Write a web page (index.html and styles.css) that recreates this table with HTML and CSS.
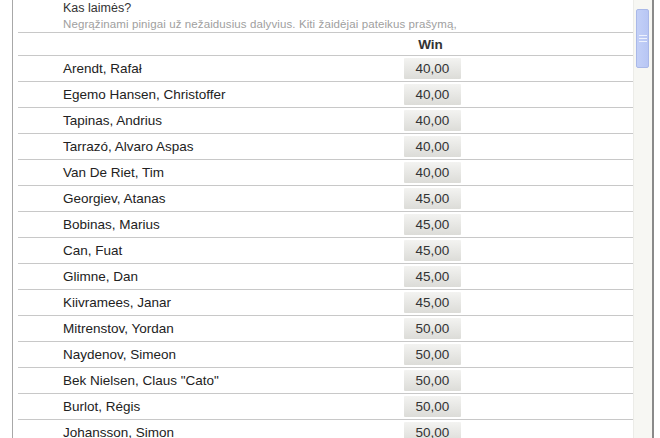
FILE: index.html
```html
<!DOCTYPE html>
<html>
<head>
<meta charset="utf-8">
<link rel="stylesheet" href="styles.css">
</head>
<body>
<div class="frame">
  <div class="panel">
    <div class="intro">
      <div class="title">Kas laimės?</div>
      <div class="desc">Negrąžinami pinigai už nežaidusius dalyvius. Kiti žaidėjai pateikus prašymą,</div>
    </div>
    <div class="row head"><span></span><span class="win-h">Win</span></div>
    <div class="row"><span class="name">Arendt, Rafał</span><span class="win">40,00</span></div>
    <div class="row"><span class="name">Egemo Hansen, Christoffer</span><span class="win">40,00</span></div>
    <div class="row"><span class="name">Tapinas, Andrius</span><span class="win">40,00</span></div>
    <div class="row"><span class="name">Tarrazó, Alvaro Aspas</span><span class="win">40,00</span></div>
    <div class="row"><span class="name">Van De Riet, Tim</span><span class="win">40,00</span></div>
    <div class="row"><span class="name">Georgiev, Atanas</span><span class="win">45,00</span></div>
    <div class="row"><span class="name">Bobinas, Marius</span><span class="win">45,00</span></div>
    <div class="row"><span class="name">Can, Fuat</span><span class="win">45,00</span></div>
    <div class="row"><span class="name">Glimne, Dan</span><span class="win">45,00</span></div>
    <div class="row"><span class="name">Kiivramees, Janar</span><span class="win">45,00</span></div>
    <div class="row"><span class="name">Mitrenstov, Yordan</span><span class="win">50,00</span></div>
    <div class="row"><span class="name">Naydenov, Simeon</span><span class="win">50,00</span></div>
    <div class="row"><span class="name">Bek Nielsen, Claus "Cato"</span><span class="win">50,00</span></div>
    <div class="row"><span class="name">Burlot, Régis</span><span class="win">50,00</span></div>
    <div class="row"><span class="name">Johansson, Simon</span><span class="win">50,00</span></div>
  </div>
  <div class="scrollbar">
    <div class="thumb"><span class="grip"></span><span class="grip"></span><span class="grip"></span></div>
  </div>
</div>
</body>
</html>
```
FILE: styles.css
```css
html, body {
  margin: 0;
  padding: 0;
  background: #fff;
}
.frame {
  width: 660px;
  height: 438px;
  overflow: hidden;
  display: flex;
  font-family: "Liberation Sans", Arial, sans-serif;
  color: #333;
}
.panel {
  margin-left: 12px;
  border-left: 1px solid #a8a8a8;
  padding-left: 5px;
  width: 615px;
  flex: none;
}
.intro {
  height: 33px;
  border-bottom: 1px solid #c8c8c8;
  padding-left: 45px;
  box-sizing: border-box;
}
.title {
  font-size: 12.5px;
  line-height: 16px;
  color: #333;
}
.desc {
  font-size: 11.5px;
  line-height: 16px;
  color: #a0a0a0;
  letter-spacing: 0.1px;
}
.row {
  display: grid;
  grid-template-columns: 386px 57px 1fr;
  align-items: center;
  height: 26px;
  box-sizing: border-box;
  border-bottom: 1px solid #c8c8c8;
}
.row.head {
  height: 23px;
}
.name {
  padding-left: 45px;
  font-size: 13.5px;
  color: #222;
}
.win-h {
  font-size: 13.5px;
  font-weight: bold;
  color: #333;
  text-align: center;
  padding-right: 4px;
}
.win {
  height: 21px;
  line-height: 21px;
  text-align: center;
  font-size: 13.5px;
  color: #333;
  background: linear-gradient(#f3f3f1, #dcdcd8);
  border-radius: 1px;
}
.scrollbar {
  width: 21px;
  background: #f7f7f3;
  border-left: 1px solid #ecece8;
  border-right: 2px solid #8a8a8a;
  box-sizing: border-box;
  padding: 9px 3px 0 2px;
  flex: none;
}
.thumb {
  height: 59px;
  background: linear-gradient(90deg, #c3d0f7, #b8c6f4);
  border: 1px solid #a9b8e8;
  border-radius: 2px;
  display: flex;
  flex-direction: column;
  justify-content: center;
  align-items: center;
  gap: 2px;
  box-sizing: border-box;
}
.grip {
  width: 8px;
  height: 1px;
  background: #eef2fd;
}
```
